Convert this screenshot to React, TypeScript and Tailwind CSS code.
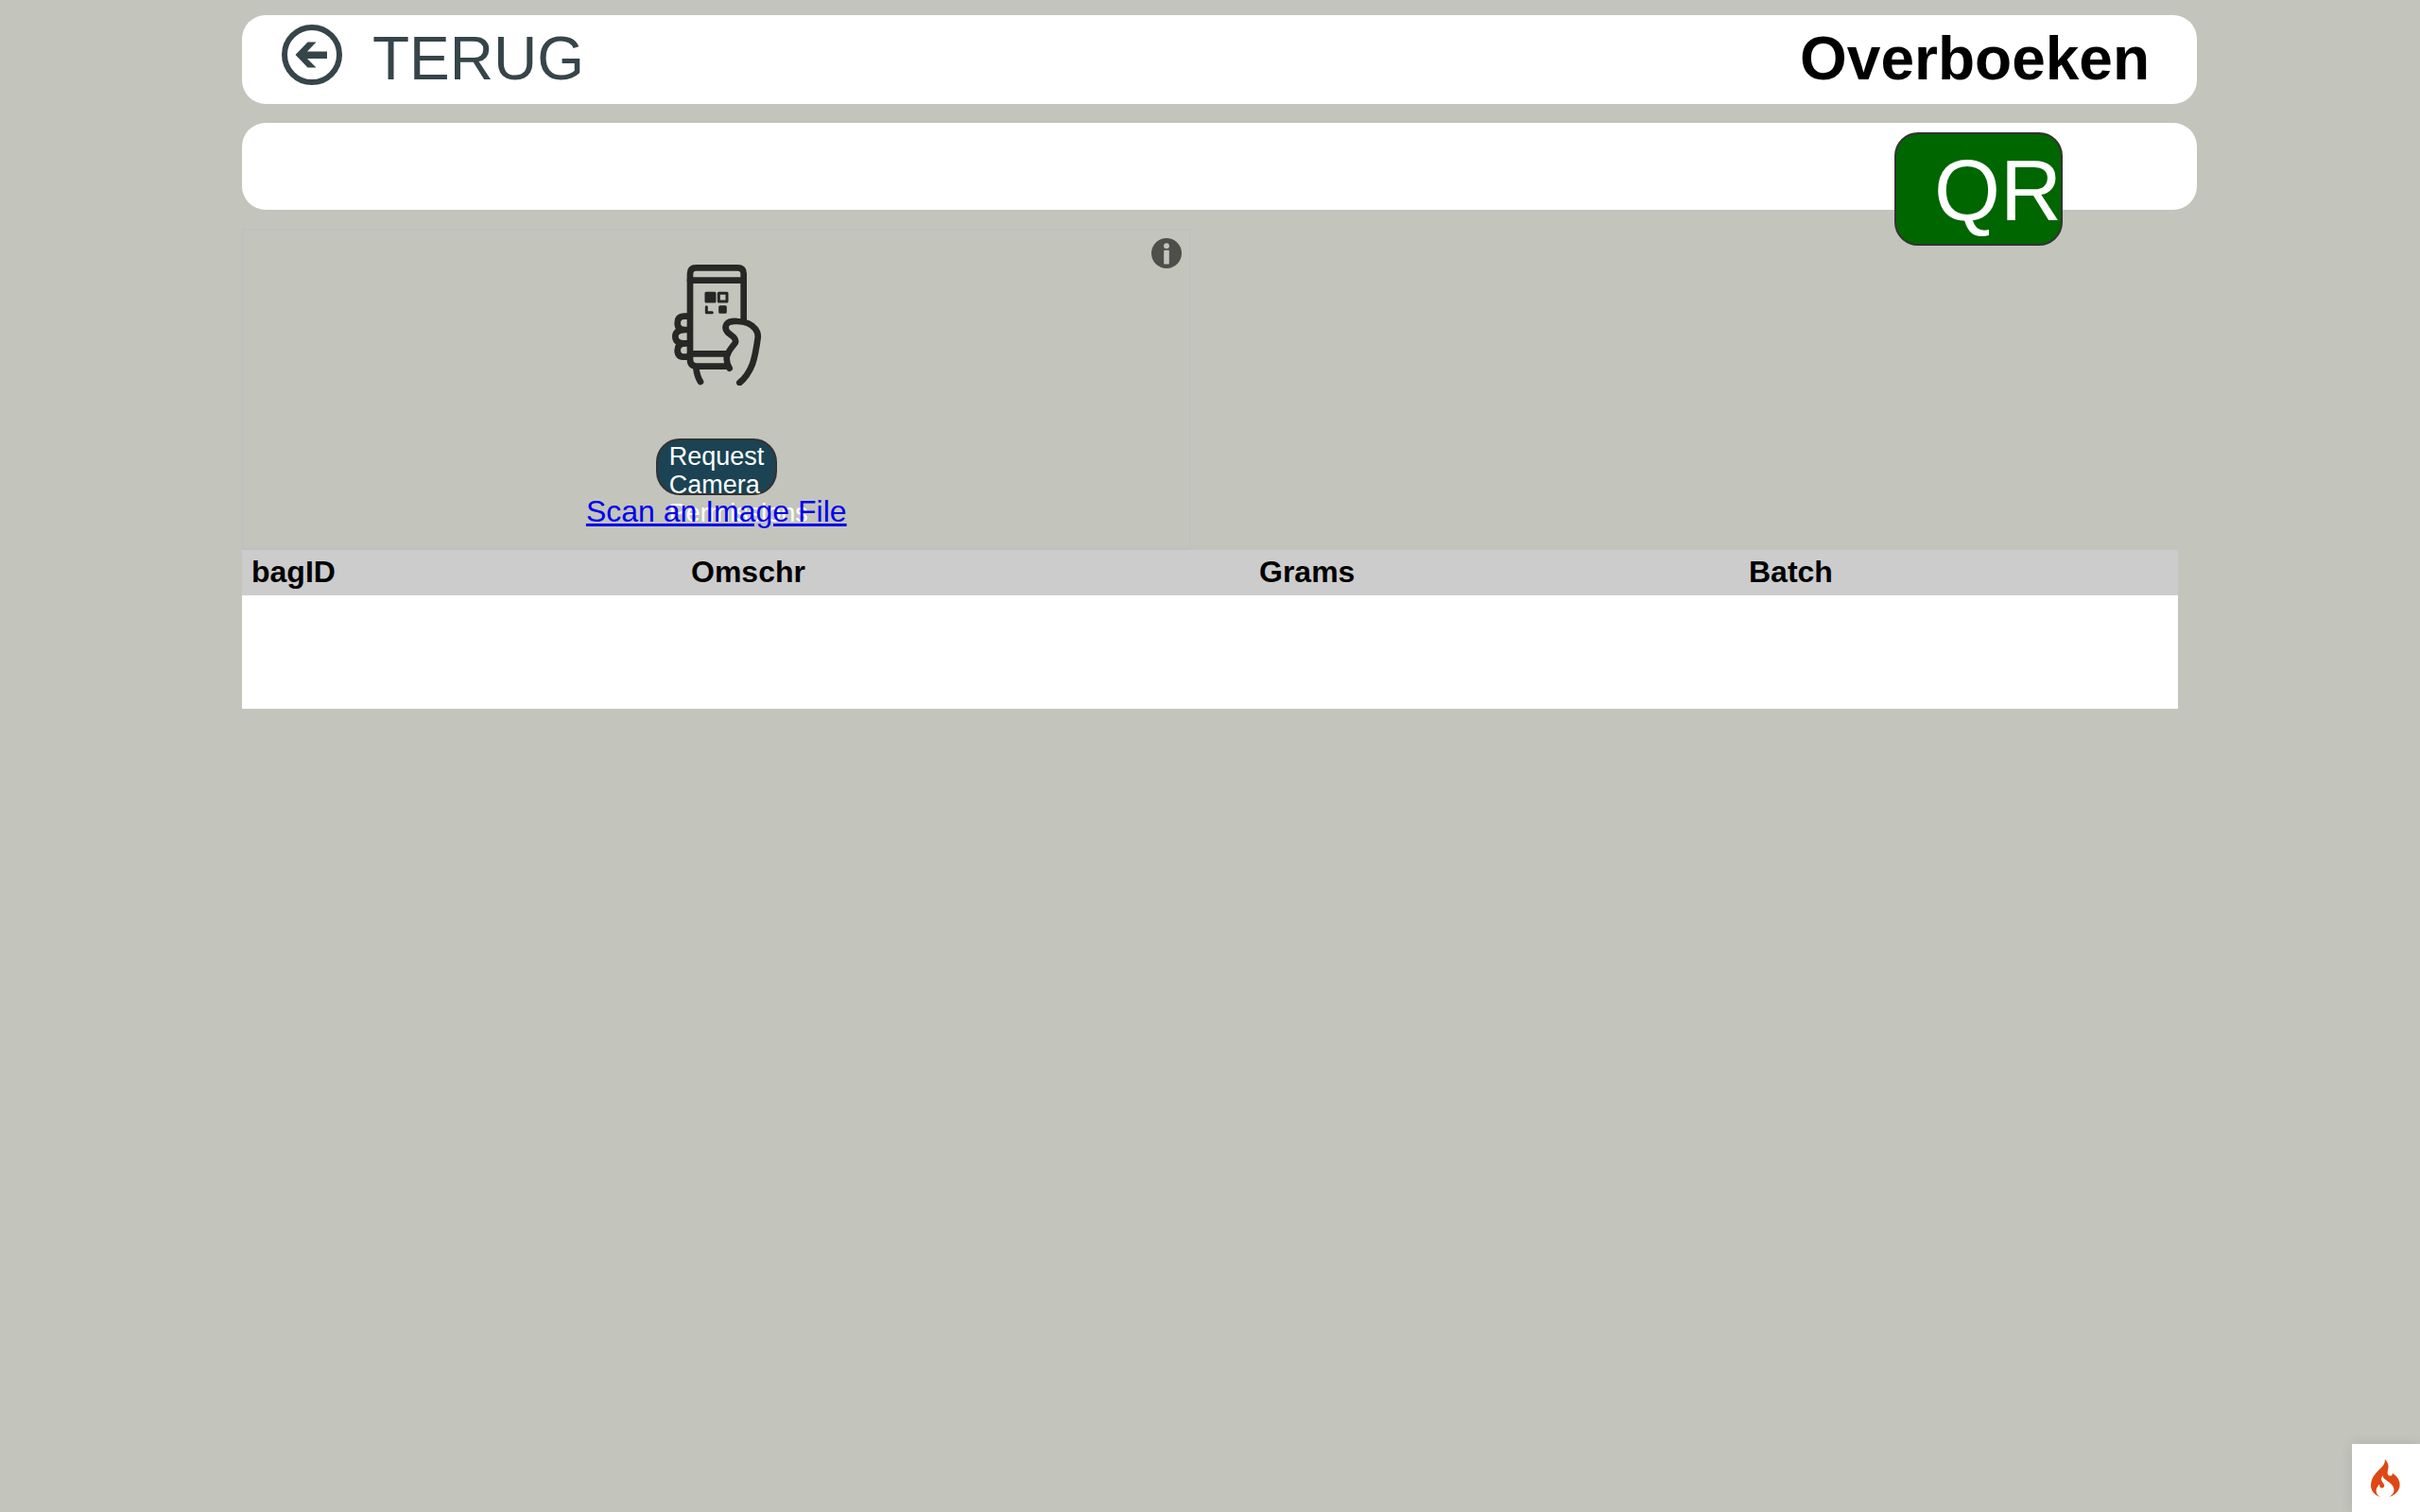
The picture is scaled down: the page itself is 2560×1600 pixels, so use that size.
import type { ReactNode } from "react";

const columns = [
  { label: "bagID", width: "w-[465px]" },
  { label: "Omschr", width: "w-[601px]" },
  { label: "Grams", width: "w-[518px]" },
  { label: "Batch", width: "w-[464px]" },
];

function Bar({ children, className }: { children: ReactNode; className: string }) {
  return (
    <div className={`-mr-5 flex items-start rounded-[25px] bg-white ${className}`}>{children}</div>
  );
}

function BackIcon() {
  return (
    <svg viewBox="0 0 64 64" className="size-16" fill="none" aria-hidden="true">
      <circle cx="32" cy="32" r="29" stroke="currentColor" strokeWidth="6" />
      <path
        d="M14.5 32 27.5 18.5H36.5L27 28.5H48V36H27L36.5 45.5H27.5Z"
        fill="currentColor"
      />
    </svg>
  );
}

function PhoneScanIcon() {
  return (
    <svg
      viewBox="12 60 384 384"
      className="size-32"
      fill="none"
      stroke="#272725"
      strokeWidth="20"
      strokeLinecap="round"
      strokeLinejoin="round"
      aria-hidden="true"
    >
      <path d="M290 234V89Q290 70 271 70H139Q120 70 120 89V361Q120 383 142 383H240" />
      <path d="M120 110H290M120 343H240" />
      <path d="M116 224H101Q80 225 80 245Q80 267 102 267H116" />
      <path d="M100 267Q73 269 73 288Q73 309 100 310H116" />
      <path d="M100 310Q80 312 80 332Q80 353 102 353H116" />
      <path d="M139 386Q141 412 153 432" />
      <path d="M245 389Q232 366 238 346Q241 336 263 309Q267 301 259 291L239 275Q228 262 236 249Q244 238 270 240Q309 241 327 264Q337 277 335 293Q328 345 318 376Q302 416 277 435" />
      <g strokeWidth="9">
        <rect x="171" y="151" width="27" height="26" fill="#272725" />
        <rect x="211" y="151" width="26" height="26" />
        <rect x="215" y="194" width="17" height="17" fill="#272725" />
        <path d="M172 194V212H190" />
      </g>
    </svg>
  );
}

function InfoIcon() {
  return (
    <svg viewBox="0 0 32 32" className="size-8" aria-hidden="true">
      <circle cx="16" cy="16" r="16" fill="#4e4e4b" />
      <circle cx="16" cy="8.2" r="2.9" fill="#c3c4bb" />
      <rect x="13.2" y="12.8" width="5.6" height="14.6" rx="0.6" fill="#c3c4bb" />
    </svg>
  );
}

function FlameIcon() {
  return (
    <svg viewBox="0 0 155 200" className="h-10 w-[31px]" aria-hidden="true">
      <path
        fill="#dd4814"
        d="M73.7 3.7c2.2 7.9-.7 18.5-7.8 29-1.8 2.6-10.7 12.2-19.7 21.3-23.9 24-33.6 37.1-40.3 54.4-7.9 20.6-7.8 40.8.5 58.2C12.8 180 27.6 193 42.5 198l6 2-3-2.2c-21-15.2-22.9-38.7-4.8-58.8 2.5-2.7 4.8-5 5.1-5 .4 0 .7 2.7.7 6.1 0 5.7.2 6.2 3.7 9.5 3 2.7 4.6 3.4 7.8 3.4 5.6 0 9.9-2.4 11.6-6.5 2.9-6.9 1.6-12-5-20.5-10.5-13.4-11.7-23.3-4.3-34.7l3.1-4.8.7 4.7c1.3 8.2 5.8 12.9 25 25.8 20.9 14.1 30.6 26.1 32.8 40.5 1.1 7.2-.1 16.1-3.1 21.8-2.7 5.3-11.2 14.3-16.5 17.4-2.4 1.4-4.3 2.6-4.3 2.8 0 .2 2.4-.4 5.3-1.4 24.1-8.3 42.7-27.1 48.2-48.6 1.9-7.6 1.9-20.2-.1-28.5-3.5-15.2-14.6-30.5-29.9-41.2l-7-4.9-.6 3.3c-.8 4.8-2.6 7.6-5.9 9.3-4.5 2.3-10.3 1.9-13.8-1-6.7-5.7-7.8-14.6-3.7-30.5 3-11.6 3.2-20.6.5-29.1C88.3 18 80.6 6.3 74.8 2.2 73.1.9 73 1 73.7 3.7z"
      />
    </svg>
  );
}

function Scanner() {
  return (
    <section className="relative mt-5 flex w-[49%] flex-col items-center border-2 border-[#c0c0c0] pt-9 pb-[22px]">
      <button type="button" aria-label="Info" className="absolute top-2 right-2">
        <InfoIcon />
      </button>
      <PhoneScanIcon />
      {/* the label is longer than the button and runs on behind the link */}
      <button
        type="button"
        className="mt-14 flex h-[60px] w-32 items-start rounded-[25px] border-2 border-[#333333] bg-[#1b4353] px-2.5 pt-0.5 text-left text-[27px] leading-[30px] text-white"
      >
        <span className="w-full pl-0.5">Request Camera Permissions</span>
      </button>
      <a href="#scan-file" className="text-[32px] leading-[34px] text-[#0000ee] underline">
        Scan an Image File
      </a>
    </section>
  );
}

export default function App() {
  return (
    <div className="min-h-screen bg-[#c3c4bb] font-['Liberation_Sans',Arial,sans-serif] text-black">
      <main className="mx-auto w-4/5 pt-4">
        <Bar className="justify-between pt-2.5 pr-[50px] pb-3 pl-[42px]">
          <a href="#terug" className="flex gap-8 text-[64px] leading-[72px] text-[#36454a]">
            <BackIcon />
            TERUG
          </a>
          <h1 className="text-[64px] leading-[72px] font-bold">Overboeken</h1>
        </Bar>

        <Bar className="mt-5 h-[92px] justify-end pt-2.5 pr-[142px]">
          <button
            type="button"
            className="relative flex h-[120px] w-[178px] items-center rounded-[25px] border-2 border-[#333333] bg-[#006600] pt-1 pl-10 text-[90px] leading-[100px] text-white"
          >
            QR
          </button>
        </Bar>

        <Scanner />

        <table className="w-full table-fixed border-collapse bg-white text-[32px] leading-9">
          <thead className="bg-[#cccccc]">
            <tr>
              {columns.map((column) => (
                <th
                  key={column.label}
                  scope="col"
                  className={`h-12 px-2.5 pb-0.5 text-left font-bold ${column.width}`}
                >
                  {column.label}
                </th>
              ))}
            </tr>
          </thead>
          <tbody>
            <tr>
              <td colSpan={4} className="h-[120px]" />
            </tr>
          </tbody>
        </table>
      </main>

      <button
        type="button"
        aria-label="Debug"
        className="fixed right-0 bottom-0 flex size-[72px] items-center justify-center bg-white pr-0.5 shadow-[0_0_12px_rgb(0_0_0_/_10%)]"
      >
        <FlameIcon />
      </button>
    </div>
  );
}
